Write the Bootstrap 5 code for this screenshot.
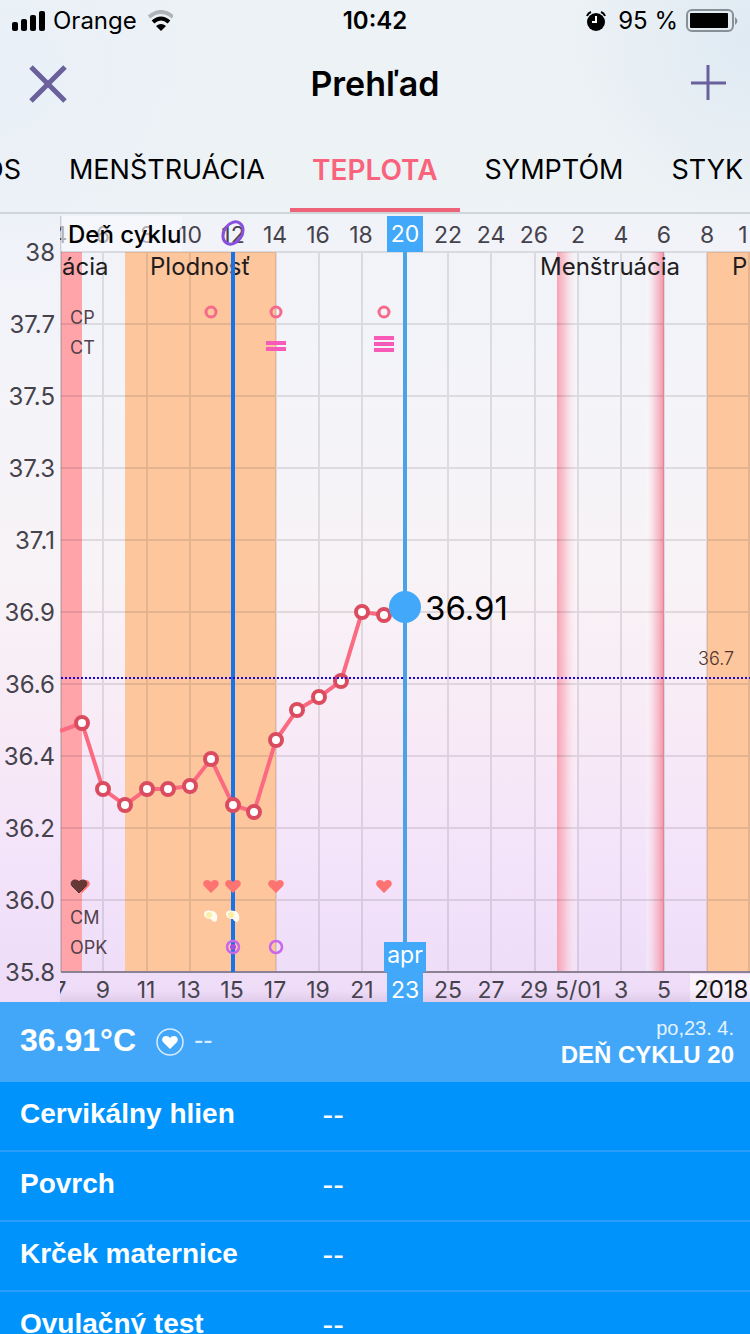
<!DOCTYPE html>
<html lang="sk">
<head>
<meta charset="utf-8">
<meta name="viewport" content="width=device-width, initial-scale=1">
<title>Prehľad</title>
<link href="https://cdn.jsdelivr.net/npm/bootstrap@5.3.0/dist/css/bootstrap.min.css" rel="stylesheet">
<style>
  body { font-family: Inter, "Liberation Sans", sans-serif; color: #000;
    background: radial-gradient(circle at 0 70px, #e9f0f8, transparent 220px), radial-gradient(circle at 100% 40px, #dfeaf3, transparent 180px),
      linear-gradient(#ecf2f5 0, #edf2f5 190px, #f1f3f9 240px, #f4f4f9 400px, #f8f3f6 580px, #f8ebf6 720px, #f4e4fa 850px, #eedcf8 1002px); }
  .status-bar { height: 42px; font-size: 24px; line-height: 40px; padding: 0 12px; }
  .status-bar > div { flex: 1 1 0; }
  .status-bar > .clock { flex: 0 0 auto; font-weight: 600; }
  .title-bar { height: 84px; padding: 0 22px; }
  .title-bar h1 { font-size: 34px; line-height: 40px; font-weight: 600; }
  .icon-btn { border: 0; background: none; padding: 0; width: 52px; height: 52px; }
  .icon-btn svg { display: block; }
  .tabs { height: 88px; border-bottom: 2px solid #d0d5da; }
  .tabs .nav-link { color: #000; font-size: 27px; line-height: 32px; padding: 28px 23px 24px; margin-right: 2px; white-space: nowrap; border-radius: 0; border-bottom: 4px solid transparent; }
  .tabs .nav-link.active { color: #f9647c; font-size: 28px; font-weight: 600; padding-right: 22px; padding-left: 22px; border-color: #ee6377; }
  .tabs .first-tab { margin-left: -40px; }
  .cycle-chart { display: block; width: 100%; height: auto; flex-shrink: 0; }
  .cycle-chart text { font-family: Inter, "Liberation Sans", sans-serif; }
  .axis { font-size: 23px; fill: #45424c; }
  .scale { font-size: 24px; fill: #45424c; }
  .phase { font-size: 24px; fill: #221c1c; }
  .row-key { font-size: 18px; fill: #54414c; }
  .details { font-family: "Liberation Sans", Arial, sans-serif; background: #0093fb; color: #fff; }
  .day-head { height: 80px; background: #42a7f9; padding: 0 16px 0 20px; }
  .day-temp { font-size: 32px; line-height: 36px; font-weight: 700; margin-bottom: 4px; }
  .day-mood { margin: 0 10px 0 20px; }
  .day-none { font-size: 28px; line-height: 32px; color: #d9edff; padding-bottom: 4px; }
  .day-date { font-size: 20px; line-height: 26px; color: #e2f3ff; }
  .day-cycle { font-size: 24px; line-height: 28px; font-weight: 700; }
  .detail-table th, .detail-table td { height: 70px; padding: 0 0 2px; font-size: 28px; line-height: 32px; vertical-align: middle; }
  .detail-table tr + tr { box-shadow: inset 0 2px #279ffa; }
  .detail-table { margin-top: -2px; }
  .detail-table th { width: 43%; padding-left: 20px; }
  .detail-table td { font-size: 32px; }
</style>
</head>
<body>
<div class="vh-100 d-flex flex-column overflow-hidden">
  <header class="flex-shrink-0">
    <div class="status-bar d-flex align-items-center">
      <div class="d-flex align-items-center">
        <svg width="33" height="20" viewBox="0 0 33 20" class="me-2" aria-hidden="true"><rect y="11" width="6" height="9" rx="2"/><rect x="9" y="8" width="6" height="12" rx="2"/><rect x="18" y="4" width="6" height="16" rx="2"/><rect x="27" width="6" height="20" rx="2"/></svg>
        <span>Orange</span>
        <svg width="28" height="22" viewBox="0 0 28 22" class="ms-2" fill="none" aria-hidden="true"><path d="M2 7Q14-3 26 7" transform="translate(2)" stroke="#aeb4b8" stroke-width="4"/><path d="M8 12Q16 5 24 12" stroke="#000" stroke-width="4"/><path d="M11 16Q16 12 21 16L16 21Z" fill="#000"/></svg>
      </div>
      <div class="clock">10:42</div>
      <div class="d-flex align-items-center justify-content-end">
        <svg width="20" height="20" viewBox="0 0 20 20" class="me-2" aria-hidden="true"><circle cx="10" cy="11" r="9"/><path d="M1 5Q2 2 5 1M19 5Q18 2 15 1" fill="none" stroke="#000" stroke-width="2"/><path d="M10 5V11H6" fill="none" stroke="#fff" stroke-width="2"/></svg>
        <span class="ms-1 me-2">95 %</span>
        <svg width="52" height="24" viewBox="0 0 52 24" aria-hidden="true"><rect x="1" y="1" width="46" height="21" rx="5" fill="none" stroke="#899095" stroke-width="2"/><rect x="4" y="4" width="38" height="15" rx="1"/><path d="M49 8Q54 12 49 16Z" fill="#899095"/></svg>
      </div>
    </div>
    <div class="title-bar d-flex align-items-center justify-content-between">
      <button type="button" class="icon-btn" aria-label="Zavrieť"><svg width="52" height="52" fill="none" stroke="#69609c" stroke-width="5"><path d="M9 9L43 43M43 9L9 43"/></svg></button>
      <h1 class="mb-0">Prehľad</h1>
      <button type="button" class="icon-btn" aria-label="Pridať"><svg width="52" height="52" fill="none" stroke="#69609c" stroke-width="3"><path d="M15 25H50M32 7V42"/></svg></button>
    </div>
    <nav class="tabs nav flex-nowrap overflow-hidden">
      <a class="nav-link first-tab" href="#pos">OS</a>
      <a class="nav-link" href="#menstruacia">MENŠTRUÁCIA</a>
      <a class="nav-link active" href="#teplota" aria-current="page">TEPLOTA</a>
      <a class="nav-link" href="#symptom">SYMPTÓM</a>
      <a class="nav-link" href="#styk">STYK</a>
    </nav>
  </header>

  <svg class="cycle-chart" viewBox="0 214 750 788" role="img" aria-label="Graf teploty">
    <defs>
      <linearGradient id="fadeR"><stop offset="0" stop-color="#f9a2b2"/><stop offset=".35" stop-color="#f9b8c6" stop-opacity=".75"/><stop offset="1" stop-color="#fff" stop-opacity=".1"/></linearGradient>
      <linearGradient id="fadeL"><stop offset="0" stop-color="#fff" stop-opacity=".2"/><stop offset=".5" stop-color="#f9b8c6" stop-opacity=".6"/><stop offset="1" stop-color="#f490a3"/></linearGradient>
      <linearGradient id="shade" x2="0" y2="1"><stop offset="0" stop-color="#8a6d9a" stop-opacity="0"/><stop offset="1" stop-color="#8a6d9a" stop-opacity=".15"/></linearGradient>
      <clipPath id="plot"><rect x="60" y="214" width="690" height="788"/></clipPath>
      <path id="heart" d="M0 7L-7 0C-9-3-7-6-4-6Q-1-6 0-4Q1-6 4-6C7-6 9-3 7 0Z"/>
      <g id="egg"><path d="M-7-2C-7-6-2-6 2-5C6-4 7 1 6 4C5 7 1 6 0 3C-3 3-7 2-7-2Z" fill="#fffbf0"/><circle cx="-2" cy="-1" r="3" fill="#faf0a5"/></g>
    </defs>
    <!-- cycle phases -->
    <rect x="61" y="252" width="21" height="720" fill="#ffa5a9"/>
    <path d="M125 252H276V972H125ZM707 252H750V972H707Z" fill="#fdc69d"/>
    <rect x="557" y="252" width="21" height="720" fill="url(#fadeR)"/>
    <rect x="646" y="252" width="18" height="720" fill="url(#fadeL)"/>
    <!-- grid -->
    <path d="M103 252V972M147 252V972M190 252V972M276 252V972M319 252V972M362 252V972M448 252V972M491 252V972M535 252V972M578 252V972M621 252V972M664 252V972M707 252V972M749 252V972M61 252H750M61 324H750M61 396H750M61 468H750M61 540H750M61 612H750M61 684H750M61 756H750M61 828H750M61 900H750" stroke="#403840" stroke-opacity=".13" stroke-width="2"/>
    <path d="M61 216V972" stroke="#777181" stroke-opacity=".6" stroke-width="1"/>
    <path d="M61 972H750" stroke="#8c8094" stroke-width="2"/>
    <!-- temperature scale -->
    <g class="scale" text-anchor="end">
      <text x="55" y="261">38</text><text x="55" y="333">37.7</text><text x="55" y="405">37.5</text><text x="55" y="477">37.3</text><text x="55" y="549">37.1</text><text x="55" y="621">36.9</text><text x="55" y="693">36.6</text><text x="55" y="765">36.4</text><text x="55" y="837">36.2</text><text x="55" y="909">36.0</text><text x="55" y="981">35.8</text>
    </g>
    <g clip-path="url(#plot)">
      <g class="axis" text-anchor="middle">
        <text x="60" y="243">4</text><text x="103" y="243">6</text><text x="147" y="243">8</text><text x="190" y="243">10</text><text x="233" y="243">12</text><text x="275" y="243">14</text><text x="318" y="243">16</text><text x="361" y="243">18</text><text x="448" y="243">22</text><text x="491" y="243">24</text><text x="534" y="243">26</text><text x="578" y="243">2</text><text x="621" y="243">4</text><text x="664" y="243">6</text><text x="707" y="243">8</text><text x="743" y="243">1</text>
        <text x="60" y="998">7</text><text x="103" y="998">9</text><text x="146" y="998">11</text><text x="189" y="998">13</text><text x="232" y="998">15</text><text x="275" y="998">17</text><text x="318" y="998">19</text><text x="362" y="998">21</text><text x="448" y="998">25</text><text x="491" y="998">27</text><text x="534" y="998">29</text><text x="578" y="998">5/01</text><text x="621" y="998">3</text><text x="664" y="998">5</text><text x="707" y="998">7</text>
      </g>
      <rect x="61" y="216" width="121" height="35" fill="#fafaff" fill-opacity=".6"/>
      <text x="68" y="243" font-size="24" font-weight="500">Deň cyklu</text>
      <rect x="690" y="974" width="60" height="28" fill="#fbf6fe" fill-opacity=".8"/>
      <text x="694" y="998" font-size="24" fill="#111">2018</text>
      <g class="phase"><text x="62" y="275">ácia</text><text x="150" y="275">Plodnosť</text><text x="540" y="275">Menštruácia</text><text x="732" y="275">P</text></g>
      <g class="row-key"><text x="70" y="324">CP</text><text x="70" y="354">CT</text><text x="70" y="924">CM</text><text x="70" y="954">OPK</text></g>
      <ellipse cx="233" cy="233" rx="9" ry="12" transform="rotate(35 233 233)" fill="none" stroke="#8950de" stroke-width="3"/>
      <path d="M233 252V972" stroke="#1674e8" stroke-width="4"/>
      <!-- temperature curve -->
      <polyline points="60,731 82,723 103,789 125,805 147,789 168,789 190,786 211,759 233,805 254,812 276,740 297,710 319,697 341,681 362,612 384,615 405,607" fill="none" stroke="#fb6a80" stroke-width="4"/>
      <g fill="#fff" stroke="#dc4c60" stroke-width="4"><circle cx="82" cy="723" r="6"/><circle cx="103" cy="789" r="6"/><circle cx="125" cy="805" r="6"/><circle cx="147" cy="789" r="6"/><circle cx="168" cy="789" r="6"/><circle cx="190" cy="786" r="6"/><circle cx="211" cy="759" r="6"/><circle cx="233" cy="805" r="6"/><circle cx="254" cy="812" r="6"/><circle cx="276" cy="740" r="6"/><circle cx="297" cy="710" r="6"/><circle cx="319" cy="697" r="6"/><circle cx="341" cy="681" r="6"/><circle cx="362" cy="612" r="6"/><circle cx="384" cy="615" r="6"/></g>
      <path d="M61 678H750" stroke="#1a06d8" stroke-width="2" stroke-dasharray="2 2"/>
      <text x="698" y="665" font-size="18" font-weight="300" fill="#4e332c">36.7</text>
      <!-- day records -->
      <g fill="none" stroke="#f5698a" stroke-width="3"><circle cx="211" cy="312" r="5"/><circle cx="276" cy="312" r="5"/><circle cx="384" cy="312" r="5"/></g>
      <path d="M266 343H286M266 349H286M374 338H394M374 344H394M374 350H394" stroke="#f75bb7" stroke-width="4"/>
      <g fill="#fd7372"><use href="#heart" x="82" y="886"/><use href="#heart" x="211" y="886"/><use href="#heart" x="233" y="886"/><use href="#heart" x="276" y="886"/><use href="#heart" x="384" y="886"/></g>
      <use href="#heart" x="79" y="886" fill="#54312f" stroke="#54312f" fill-opacity=".9"/>
      <use href="#egg" x="211" y="916"/><use href="#egg" x="233" y="916"/>
      <g fill="none" stroke="#c867ec" stroke-width="2.5"><circle cx="233" cy="947" r="6"/><circle cx="276" cy="947" r="6"/></g><circle cx="233" cy="947" r="3" fill="#a34de6"/>
      <rect y="990" width="750" height="12" fill="url(#shade)"/>
      <!-- selected day -->
      <path d="M405 250V944" stroke="#4aa3e6" stroke-width="4"/>
      <path d="M387 216H423V252H387ZM384 942H426V972H423V1002H387V972H384Z" fill="#42a9fa"/>
      <circle cx="405" cy="607" r="16" fill="#42a9fa"/>
      <g fill="#fff" font-size="23" text-anchor="middle"><text x="405" y="242">20</text><text x="405" y="963">apr</text><text x="405" y="998">23</text></g>
      <text x="425" y="620" font-size="33">36.91</text>
    </g>
  </svg>

  <section class="details flex-grow-1">
    <div class="day-head d-flex align-items-center justify-content-between">
      <div class="d-flex align-items-center">
        <span class="day-temp">36.91°C</span>
        <svg width="28" height="28" viewBox="-14 -14 28 28" class="day-mood" aria-hidden="true"><circle r="13" fill="none" stroke="#d9edff" stroke-width="1.5"/><use href="#heart" fill="#fff"/></svg>
        <span class="day-none">--</span>
      </div>
      <div class="text-end">
        <div class="day-date">po,23. 4.</div>
        <div class="day-cycle">DEŇ CYKLU 20</div>
      </div>
    </div>
    <table class="detail-table w-100">
      <tbody>
        <tr><th scope="row">Cervikálny hlien</th><td>--</td></tr>
        <tr><th scope="row">Povrch</th><td>--</td></tr>
        <tr><th scope="row">Krček maternice</th><td>--</td></tr>
        <tr><th scope="row">Ovulačný test</th><td>--</td></tr>
      </tbody>
    </table>
  </section>
</div>
<script src="https://cdn.jsdelivr.net/npm/bootstrap@5.3.0/dist/js/bootstrap.bundle.min.js"></script>
</body>
</html>
